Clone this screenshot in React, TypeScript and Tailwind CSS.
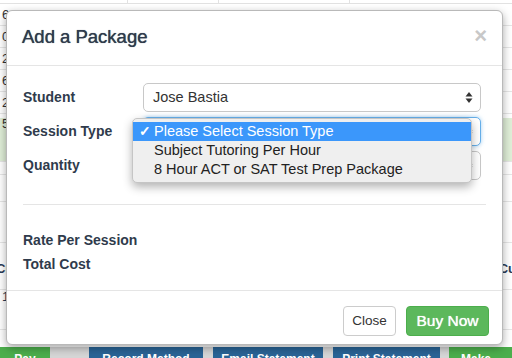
import React from "react";

const font = { fontFamily: '"Liberation Sans", Arial, sans-serif' };

function SelectArrows() {
  return (
    <svg width="8" height="13" viewBox="0 0 8 13" className="text-[#333]">
      <path d="M4 1 L7.5 5.5 H0.5 Z" fill="currentColor" />
      <path d="M4 12 L7.5 7.5 H0.5 Z" fill="currentColor" />
    </svg>
  );
}

function FakeSelect({ value, focus }: { value?: string; focus?: boolean }) {
  return (
    <div
      className={
        "flex h-[29px] items-center justify-between rounded-[5px] border bg-white pl-[9px] pr-[7px] text-[14.5px] font-normal text-[#333] " +
        (focus
          ? "border-[#66afe9] shadow-[0_0_4px_rgba(102,175,233,0.6)]"
          : "border-[#c8c8c8]")
      }
    >
      <span>{value}</span>
      <SelectArrows />
    </div>
  );
}

function Background() {
  const rows = ["6", "0", "2", "6", "2"];
  return (
    <div className="flex h-full flex-col bg-white text-[13px] text-[#333]">
      <div className="grid h-[4px] grid-cols-[128px_91px_131px_1fr] border-b border-[#e2e2e2]">
        <div className="border-r border-[#e2e2e2]" />
        <div className="border-r border-[#e2e2e2]" />
        <div className="border-r border-[#e2e2e2]" />
        <div />
      </div>
      {rows.map((r, i) => (
        <div
          key={i}
          className="flex h-[22px] items-center border-b border-[#e6e6e6] pl-[2px]"
        >
          {r}
        </div>
      ))}
      <div className="flex h-[4px] items-start pl-[2px]" />
      <div className="flex h-[44px] items-start border-b border-[#e6e6e6] bg-[#dfeed7] pl-[2px] leading-[12px]">
        5
      </div>
      <div className="h-[13px] border-b border-[#e6e6e6]" />
      <div className="h-[27px] border-b border-[#e6e6e6]" />
      <div className="h-[41px] border-b border-[#e6e6e6]" />
      <div className="flex h-[47px] items-center justify-between border-b border-[#e6e6e6] pt-[6px] font-bold text-[#2a3b55]">
        <span className="-ml-[4px]">Cu</span>
        <span className="-mr-[4px]">Cu</span>
      </div>
      <div className="flex h-[40px] items-start border-b border-[#e6e6e6] text-[#2a3b55]">
        <span className="-mt-[3px] pl-[2px]">1</span>
      </div>
      <div className="mt-auto flex h-[11px] overflow-hidden text-[12px] font-bold leading-[24px] text-white">
        <div className="w-[50px] bg-[#4cae4c] text-center">Pay</div>
        <div className="w-[39px] bg-[#d6d6d6]" />
        <div className="w-[114px] bg-[#2a6496] text-center">Record Method</div>
        <div className="w-[10px] bg-[#d6d6d6]" />
        <div className="w-[110px] bg-[#2a6496] text-center">Email Statement</div>
        <div className="w-[10px] bg-[#d6d6d6]" />
        <div className="w-[107px] bg-[#2a6496] text-center">Print Statement</div>
        <div className="w-[9px] bg-[#d6d6d6]" />
        <div className="flex-1 bg-[#4cae4c] pl-[12px]">Make Pay</div>
      </div>
    </div>
  );
}

export default function App() {
  const options = [
    "Please Select Session Type",
    "Subject Tutoring Per Hour",
    "8 Hour ACT or SAT Test Prep Package",
  ];

  return (
    <div className="relative h-[358px] w-[512px] overflow-hidden bg-white" style={font}>
      <Background />

      {/* modal */}
      <div className="absolute left-[6px] top-[10px] flex h-[335px] w-[497px] flex-col rounded-[6px] border border-[#b9b9b9] bg-white shadow-[0_3px_9px_rgba(0,0,0,0.35)]">
        <div className="flex h-[55px] items-center justify-between border-b border-[#e5e5e5] pl-[15px] pr-[15px]">
          <h4 className="pb-[2px] text-[18.5px] text-[#2f3b4c] [text-shadow:0_0_0.7px_#2f3b4c]">Add a Package</h4>
          <span className="pb-[4px] text-[22px] font-bold leading-none text-[#c8c8c8]">×</span>
        </div>

        <div className="flex flex-1 flex-col px-[16px] pt-[17px] text-[#2f3b4c]">
          <div className="grid grid-cols-[120px_1fr] items-center gap-y-[5px] pr-[5px] text-[14px] font-bold">
            <span>Student</span>
            <FakeSelect value="Jose Bastia" />
            <span>Session Type</span>
            <FakeSelect focus />
            <span>Quantity</span>
            <FakeSelect />
          </div>
          <div className="mt-[24px] border-t border-[#e5e5e5] pr-[5px]" />
          <div className="mt-[27px] flex flex-col gap-[7px] text-[14px] font-bold leading-[17px]">
            <span>Rate Per Session</span>
            <span>Total Cost</span>
          </div>
        </div>

        <div className="flex h-[54px] items-start justify-end gap-[10px] border-t border-[#e5e5e5] pr-[13px] pt-[15px]">
          <button className="h-[30px] w-[53px] rounded-[4px] border border-[#cccccc] bg-white text-[13.5px] text-[#333]">
            Close
          </button>
          <button className="h-[30px] w-[83px] rounded-[4px] border border-[#4cae4c] bg-[#5cb85c] text-[15.5px] text-white [text-shadow:0_0_0.8px_#fff]">
            Buy Now
          </button>
        </div>
      </div>

      {/* open dropdown menu */}
      <div className="absolute left-[132px] top-[118px] w-[340px] rounded-[5px] border border-[#c5c5c5] bg-[#efefef] py-[3px] text-[14.5px] text-[#222] shadow-[0_4px_10px_rgba(0,0,0,0.3)]">
        {options.map((o, i) => (
          <div
            key={o}
            className={
              "flex h-[19px] items-center " +
              (i === 0 ? "bg-[#3b97fb] text-white" : "")
            }
          >
            <span className="w-[21px] pl-[6px] text-[14px] font-bold">{i === 0 ? "✓" : ""}</span>
            <span>{o}</span>
          </div>
        ))}
      </div>
    </div>
  );
}
